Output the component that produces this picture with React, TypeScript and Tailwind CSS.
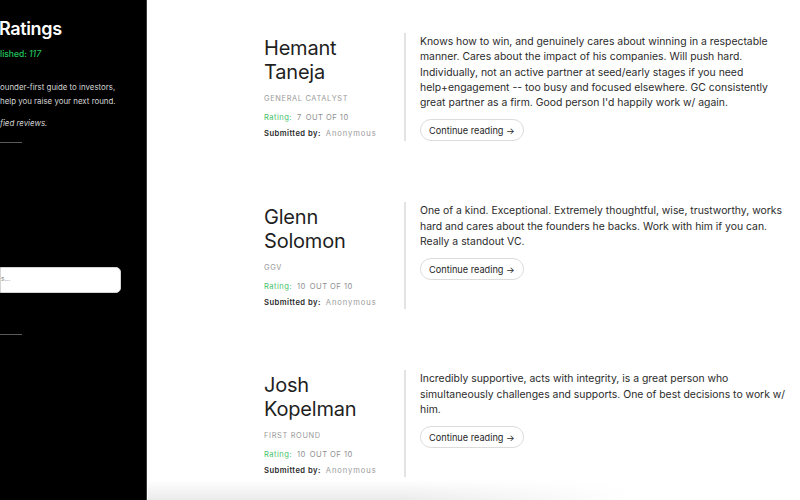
import React from 'react';

interface Review {
  name: string[];
  firm: string;
  rating: number;
  text: string;
}

const reviews: Review[] = [
  {
    name: ['Hemant', 'Taneja'],
    firm: 'General Catalyst',
    rating: 7,
    text:
      "Knows how to win, and genuinely cares about winning in a respectable manner. Cares about the impact of his companies. Will push hard. Individually, not an active partner at seed/early stages if you need help+engagement -- too busy and focused elsewhere. GC consistently great partner as a firm. Good person I'd happily work w/ again.",
  },
  {
    name: ['Glenn', 'Solomon'],
    firm: 'GGV',
    rating: 10,
    text:
      'One of a kind. Exceptional. Extremely thoughtful, wise, trustworthy, works hard and cares about the founders he backs. Work with him if you can. Really a standout VC.',
  },
  {
    name: ['Josh', 'Kopelman'],
    firm: 'First Round',
    rating: 10,
    text:
      'Incredibly supportive, acts with integrity, is a great person who simultaneously challenges and supports. One of best decisions to work w/ him.',
  },
];

const Sidebar = () => (
  <aside className="w-[147px] shrink-0 h-full bg-black border-r border-[#3a3a3a] overflow-hidden flex flex-col">
    <h1 className="mt-[17px] -ml-[1px] text-white text-[18px] leading-[24px] font-semibold tracking-[-0.02em] whitespace-nowrap">
      Ratings
    </h1>
    <p className="mt-[7px] text-[#22c55e] text-[8.5px] leading-[12px] font-medium whitespace-nowrap">
      lished: <span className="italic">117</span>
    </p>
    <p className="mt-[20px] text-[#d4d4d4] text-[7.9px] leading-[14px] whitespace-nowrap">
      ounder-first guide to investors,
      <br />
      help you raise your next round.
    </p>
    <p className="mt-[9px] text-[#d4d4d4] text-[7.9px] leading-[12px] italic whitespace-nowrap">fied reviews.</p>
    <div className="mt-[13px] w-[22px] h-px bg-[#5a5a5a]" />
    <div className="mt-[124px] w-[121px] h-[26px] bg-white rounded-r-[5px] border border-[#d4d4d4] flex items-center">
      <span className="text-[6.5px] text-[#777]">s...</span>
    </div>
    <div className="mt-[41px] w-[22px] h-px bg-[#5a5a5a]" />
  </aside>
);

const ReviewRow = ({ review }: { review: Review }) => (
  <article className="flex">
    <div className="w-[140px] shrink-0 pt-[3px]">
      <h2 className="text-[#1f1f1f] text-[20px] leading-[24px] font-normal tracking-[-0.01em]">
        {review.name[0]}
        <br />
        {review.name[1]}
      </h2>
      <p className="mt-[9px] text-[7.4px] leading-[12px] uppercase tracking-[0.09em] text-[#9a9a9a]">{review.firm}</p>
      <p className="mt-[7px] text-[7.6px] leading-[12px] tracking-[0.06em] text-[#8f8f8f] whitespace-nowrap">
        <span className="text-[#3fc26b]">Rating:</span>
        <span className="ml-[5px]">{review.rating}</span>
        <span className="ml-[4px] uppercase">Out of 10</span>
      </p>
      <p className="mt-[4px] text-[7.6px] leading-[12px] tracking-[0.06em] whitespace-nowrap">
        <span className="text-[#2a2a2a] font-semibold">Submitted by:</span>
        <span className="ml-[5px] text-[#9a9a9a] tracking-[0.12em]">Anonymous</span>
      </p>
    </div>
    <div className="flex-1 border-l-2 border-[#e3e3e3] pl-[14px] pt-[1px] pr-[12px]">
      <p className="text-[#2b2b2b] text-[10.4px] leading-[15.3px] max-w-[373px]">{review.text}</p>
      <button className="mt-[9px] h-[22px] px-[8px] rounded-full border border-[#dcdcdc] bg-white text-[#1f1f1f] text-[9.2px] leading-none">
        Continue reading →
      </button>
    </div>
  </article>
);

export default function App() {
  return (
    <div
      className="relative w-[800px] h-[500px] overflow-hidden flex bg-white"
      style={{ fontFamily: 'Inter, "Noto Sans", sans-serif' }}
    >
      <Sidebar />
      <main className="flex-1 pl-[117px] pt-[33px] flex flex-col gap-[61px]">
        {reviews.map((r) => (
          <ReviewRow key={r.name.join(' ')} review={r} />
        ))}
      </main>
      <div className="pointer-events-none absolute left-[148px] bottom-0 w-[480px] h-[20px] bg-gradient-to-b from-white to-[#ebebeb]" />
      <div className="pointer-events-none absolute left-[400px] bottom-0 w-[228px] h-[20px] bg-gradient-to-r from-transparent to-white" />
    </div>
  );
}
